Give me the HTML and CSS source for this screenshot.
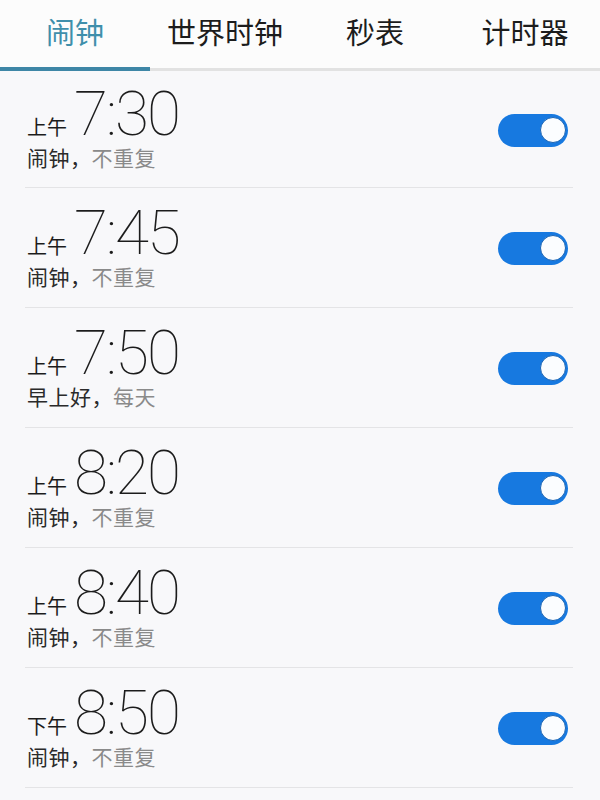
FILE: index.html
```html
<!DOCTYPE html>
<html lang="zh-CN">
<head>
    <meta charset="UTF-8">
    <meta name="viewport" content="width=device-width, initial-scale=1.0">
    <title>闹钟</title>
    <link rel="stylesheet" href="styles.css">
</head>
<body>

    <nav class="tabs">
        <div class="tab active">闹钟</div>
        <div class="tab">世界时钟</div>
        <div class="tab">秒表</div>
        <div class="tab">计时器</div>
    </nav>

    <ul class="alarms">
        <li class="alarm">
            <div class="info">
                <div class="time"><span class="ampm">上午</span><span class="clock">7:30</span></div>
                <div class="label">闹钟，<span class="repeat">不重复</span></div>
            </div>
            <span class="switch on"></span>
        </li>
        <li class="alarm">
            <div class="info">
                <div class="time"><span class="ampm">上午</span><span class="clock">7:45</span></div>
                <div class="label">闹钟，<span class="repeat">不重复</span></div>
            </div>
            <span class="switch on"></span>
        </li>
        <li class="alarm">
            <div class="info">
                <div class="time"><span class="ampm">上午</span><span class="clock">7:50</span></div>
                <div class="label">早上好，<span class="repeat">每天</span></div>
            </div>
            <span class="switch on"></span>
        </li>
        <li class="alarm">
            <div class="info">
                <div class="time"><span class="ampm">上午</span><span class="clock">8:20</span></div>
                <div class="label">闹钟，<span class="repeat">不重复</span></div>
            </div>
            <span class="switch on"></span>
        </li>
        <li class="alarm">
            <div class="info">
                <div class="time"><span class="ampm">上午</span><span class="clock">8:40</span></div>
                <div class="label">闹钟，<span class="repeat">不重复</span></div>
            </div>
            <span class="switch on"></span>
        </li>
        <li class="alarm">
            <div class="info">
                <div class="time"><span class="ampm">下午</span><span class="clock">8:50</span></div>
                <div class="label">闹钟，<span class="repeat">不重复</span></div>
            </div>
            <span class="switch on"></span>
        </li>
    </ul>

</body>
</html>
```

FILE: styles.css
```css
body {
    margin: 0;
    font-family: 'Noto Sans CJK SC', sans-serif;
    background-color: #f8f8fa;
    color: #1c1c1c;
}
.tabs {
    display: grid;
    grid-template-columns: repeat(4, 1fr);
    height: 68px;
    background-color: #fcfcfc;
    border-bottom: 3px solid #e2e2e2;
}
.tab {
    display: flex;
    align-items: center;
    justify-content: center;
    font-size: 29px;
    padding-bottom: 6px;
    box-sizing: border-box;
}
.tab.active {
    color: #3f8fab;
    border-bottom: 4px solid #3e86a6;
    margin-bottom: -3px;
}
.alarms {
    list-style: none;
    margin: 0;
    padding: 0 27px 0 25px;
}
.alarm {
    display: flex;
    align-items: center;
    justify-content: space-between;
    height: 120px;
    box-sizing: border-box;
    padding: 2px 5px 0 2px;
    border-bottom: 1px solid #e4e4e6;
}
.alarm:first-child {
    height: 117px;
}
.time {
    display: flex;
    align-items: baseline;
    line-height: 48px;
}
.ampm {
    font-size: 20px;
    line-height: 20px;
    margin-right: 7px;
}
.clock {
    font-family: 'Roboto', sans-serif;
    font-weight: 100;
    font-size: 62px;
    letter-spacing: -2px;
}
.label {
    font-size: 21px;
    line-height: 26px;
    letter-spacing: 0.5px;
    margin-top: 6px;
    color: #2a2a2a;
}
.repeat {
    color: #8a8a8a;
}
.switch {
    position: relative;
    width: 70px;
    height: 33px;
    border-radius: 17px;
    background-color: #1779e0;
}
.switch.on::after {
    content: '';
    position: absolute;
    right: 2px;
    top: 3px;
    width: 24px;
    height: 24px;
    border-radius: 50%;
    background-color: #fbfdff;
    border: 1.5px solid #1a64b4;
}
```
